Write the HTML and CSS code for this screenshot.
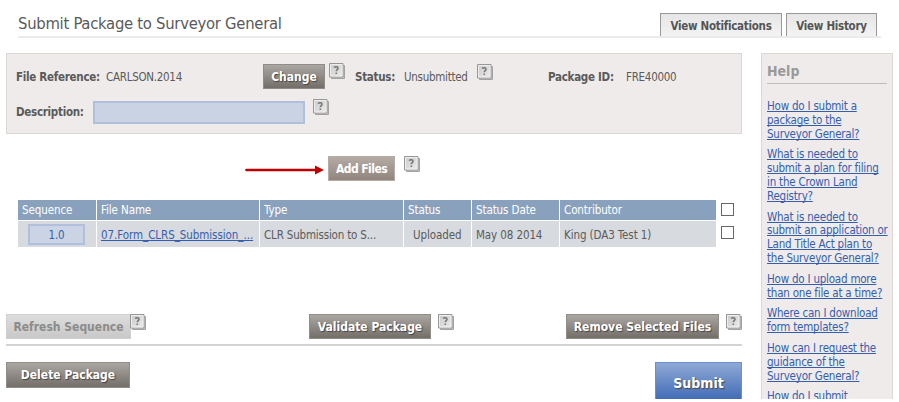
FILE: index.html
```html
<!DOCTYPE html>
<html lang="en">
<head>
<meta charset="utf-8">
<title>Submit Package to Surveyor General</title>
<link rel="stylesheet" href="styles.css">
</head>
<body>
<svg width="0" height="0" class="defs">
  <defs>
    <linearGradient id="tile" x1="0" y1="0" x2="1" y2="1"><stop offset="0" stop-color="#c9c9c9"/><stop offset="1" stop-color="#ececec"/></linearGradient>
    <symbol id="q" viewBox="0 0 17 17">
      <path d="M2.500 2.500h13v13h-13z" fill="#c6c5c3" stroke="#a3a2a0"/>
      <path d="M.5 .5h13.500v13.500h-13.500z" fill="url(#tile)" stroke="#989796"/>
      <path d="M1.500 1.500h11.500v11.500h-11.500z" fill="none" stroke="#eee"/>
      <path d="M5.300 4.700C5.800 3.500 9 3.300 9 5.200 9 6.500 7.300 6.700 7.300 8.300M7.300 9.500v1.500" fill="none" stroke="#777" stroke-width="1.600"/>
    </symbol>
  </defs>
</svg>
<header class="top">
  <h1>Submit Package to Surveyor General</h1>
  <nav>
    <button class="tab notifications"><span>View Notifications</span></button>
    <button class="tab history"><span>View History</span></button>
  </nav>
</header>
<div class="page">
  <main>
    <section class="panel">
      <div class="line first">
        <b class="ref">File Reference:</b><span class="refval">CARLSON.2014</span>
        <button class="btn change"><span>Change</span></button>
        <svg class="q q1"><use href="#q"/></svg>
        <b class="status">Status:</b><span class="statusval">Unsubmitted</span>
        <svg class="q q2"><use href="#q"/></svg>
        <b class="pid">Package ID:</b><span class="pidval">FRE40000</span>
      </div>
      <div class="line second">
        <b class="desc">Description:</b><input class="descbox" aria-label="Description">
        <svg class="q q3"><use href="#q"/></svg>
      </div>
    </section>
    <div class="add">
      <svg class="arrow" viewBox="0 0 79 10"><path d="M1.500 5H71" stroke="#c00000" stroke-width="2.700" stroke-linecap="round"/><path d="M70 .5L79 5l-9 4.500z" fill="#c00000"/></svg>
      <button class="btn light"><span>Add Files</span></button>
      <svg class="q"><use href="#q"/></svg>
    </div>
    <div class="files">
      <table>
        <colgroup><col class="c1"><col class="c2"><col class="c3"><col class="c4"><col class="c5"><col class="c6"></colgroup>
        <thead><tr><th>Sequence</th><th>File Name</th><th>Type</th><th>Status</th><th>Status Date</th><th>Contributor</th></tr></thead>
        <tbody><tr><td class="seq"><div>1.0</div></td><td><a class="name">07.Form_CLRS_Submission_...</a></td><td class="type">CLR Submission to S...</td><td class="up">Uploaded</td><td>May 08 2014</td><td>King (DA3 Test 1)</td></tr></tbody>
      </table>
      <div class="checks"><i></i><i></i></div>
    </div>
    <div class="actions">
      <button class="btn refresh"><span>Refresh Sequence</span></button>
      <svg class="q q4"><use href="#q"/></svg>
      <button class="btn validate"><span>Validate Package</span></button>
      <svg class="q q5"><use href="#q"/></svg>
      <button class="btn remove"><span>Remove Selected Files</span></button>
      <svg class="q q6"><use href="#q"/></svg>
    </div>
    <div class="final">
      <button class="btn delete"><span>Delete Package</span></button>
      <button class="btn submit"><span>Submit</span></button>
    </div>
  </main>
  <aside>
    <h2>Help</h2>
    <ul>
      <li><a>How do I submit a<br>package to the<br>Surveyor General?</a></li>
      <li><a>What is needed to<br>submit a plan for filing<br>in the Crown Land<br>Registry?</a></li>
      <li><a>What is needed to<br>submit an application or<br>Land Title Act plan to<br>the Surveyor General?</a></li>
      <li><a>How do I upload more<br>than one file at a time?</a></li>
      <li><a>Where can I download<br>form templates?</a></li>
      <li><a>How can I request the<br>guidance of the<br>Surveyor General?</a></li>
      <li><a>How do I submit</a></li>
    </ul>
  </aside>
</div>
</body>
</html>
```
FILE: styles.css
```css
* { box-sizing: border-box; }
body { margin: 0; width: 899px; height: 399px; overflow: hidden; background: #fff; color: #5a5a5a; font: 11.5px/14px "DejaVu Sans Condensed", "DejaVu Sans", sans-serif; font-stretch: condensed; letter-spacing: -0.28px; }
html { background: #fff; overflow: hidden; }
button, input { font: inherit; letter-spacing: inherit; padding: 0; margin: 0; border: 0; }
svg { flex: none; }
.defs { display: block; height: 0; }
.top { display: flex; justify-content: space-between; margin-left: 18px; width: 863px; height: 38px; padding-top: 13px; border-bottom: 2px solid #ebebeb; }
h1 { margin: 0; font-size: 16.5px; line-height: 22px; font-weight: 400; white-space: nowrap; }
nav { display: flex; gap: 4px; margin-right: 4px; }
.tab { height: 23px; border: 1px solid #999; border-bottom: 0; background: linear-gradient(#e6e6e6, #f3f3f3); color: #555; font-weight: 700; white-space: nowrap; padding-top: 2px; }
.notifications { width: 122px; }
.history { width: 91px; }
.page { display: grid; grid-template-columns: 736px 132px; gap: 19px; margin: 15px 0 0 6px; height: 346px; }
.panel { height: 81px; border: 1px solid #dcd7d3; background: #efebea; padding: 10px 0 0 9px; }
.line { display: flex; white-space: nowrap; }
.line b, .line span { flex: none; }
.line > b, .line > span { line-height: 26px; }
.first { height: 37px; }
.second > b { margin-top: -2px; }
.ref { width: 90px; }
.refval { width: 157px; }
.change { width: 62px; }
.q { width: 17px; height: 17px; }
.q1 { margin-left: 4px; margin-top: -1px; }
.status { margin-left: 9px; width: 49px; }
.statusval { width: 73px; }
.pid { margin-left: 54px; width: 78px; }
.desc { width: 77px; }
.descbox { width: 212px; height: 23px; border: 2px solid #b0c0db; background: #c9d3e3; }
.q3 { margin-left: 8px; margin-top: -2px; }
.btn { flex: none; height: 25px; border: 1px solid #918c88; background: linear-gradient(#aaa6a2, #736e68); color: #fff; font-size: 12px; letter-spacing: 0; font-weight: 700; text-shadow: 1px 1px 1px #444; white-space: nowrap; }
.btn span { display: inline-block; }
.add { display: flex; margin: 22px 0 0 239px; height: 44px; }
.arrow { width: 79px; height: 10px; margin-top: 9px; }
.light { width: 67px; margin: 0 9px 0 4px; background: linear-gradient(#b5aba5, #90867e); text-shadow: none; border-color: #b5aca6; letter-spacing: -0.55px; }
.files { display: flex; margin-left: 12px; height: 48px; }
table { width: 698px; height: 47px; table-layout: fixed; border-collapse: separate; border-spacing: 0; letter-spacing: -0.1px; }
.c1 { width: 79px; } .c2 { width: 163px; } .c3 { width: 144px; } .c4 { width: 68px; } .c5 { width: 88px; }
th, td { padding: 0 4px; text-align: left; white-space: nowrap; border-right: 1px solid #fff; }
th:last-child, td:last-child { border-right: 0; }
th { height: 20px; background: #8aa1bd; color: #fff; font-weight: 400; }
td { height: 27px; border-top: 1px solid #fff; background: #d7dadf; padding-top: 1px; }
td.seq { padding: 0; }
.seq div { width: 57px; height: 21px; margin: 0 0 0 10px; border: 2px solid #b0c0db; background: #cad4e4; color: #355fae; line-height: 19px; text-align: center; }
td.up { padding-left: 9px; }
td.type { letter-spacing: -0.18px; }
a { color: #355fae; text-decoration: underline; text-underline-offset: 1px; text-decoration-skip-ink: none; }
.name { letter-spacing: -0.06px; }
.checks { margin: 3px 0 0 5px; }
.checks i { display: block; width: 13px; height: 13px; margin-bottom: 10px; border: 1px solid #666; background: #fff; }
.actions { display: flex; height: 32px; margin-top: 66px; border-bottom: 2px solid #d4d3d3; }
.refresh { width: 125px; background: linear-gradient(#ddd, #c8c8c8); color: #8b8b8b; text-shadow: none; border-color: #d0d0d0; }
.q4 { margin-left: -1px; }
.validate { width: 122px; margin-left: 162px; }
.q5 { margin-left: 7px; }
.remove { width: 153px; margin-left: 111px; }
.q6 { margin-left: 7px; }
.final { display: flex; justify-content: space-between; margin-top: 16px; }
.delete { width: 124px; height: 26px; }
.submit { width: 87px; height: 42px; border-color: #6b8fc8; background: linear-gradient(#8ea9d5, #416bb5 37px); font-size: 14px; }
aside { height: 346px; overflow: hidden; border: 1px solid #dcd7d3; border-bottom: 0; background: #efebea; padding: 9px 5px 0; }
h2 { margin: 0 0 16px; height: 21px; border-bottom: 1px solid #bebbba; color: #999; font-size: 14px; line-height: 16px; letter-spacing: 0; }
ul { margin: 0; padding: 0; list-style: none; white-space: nowrap; letter-spacing: -0.22px; }
li { margin-bottom: 7px; line-height: 13.800px; }
```
